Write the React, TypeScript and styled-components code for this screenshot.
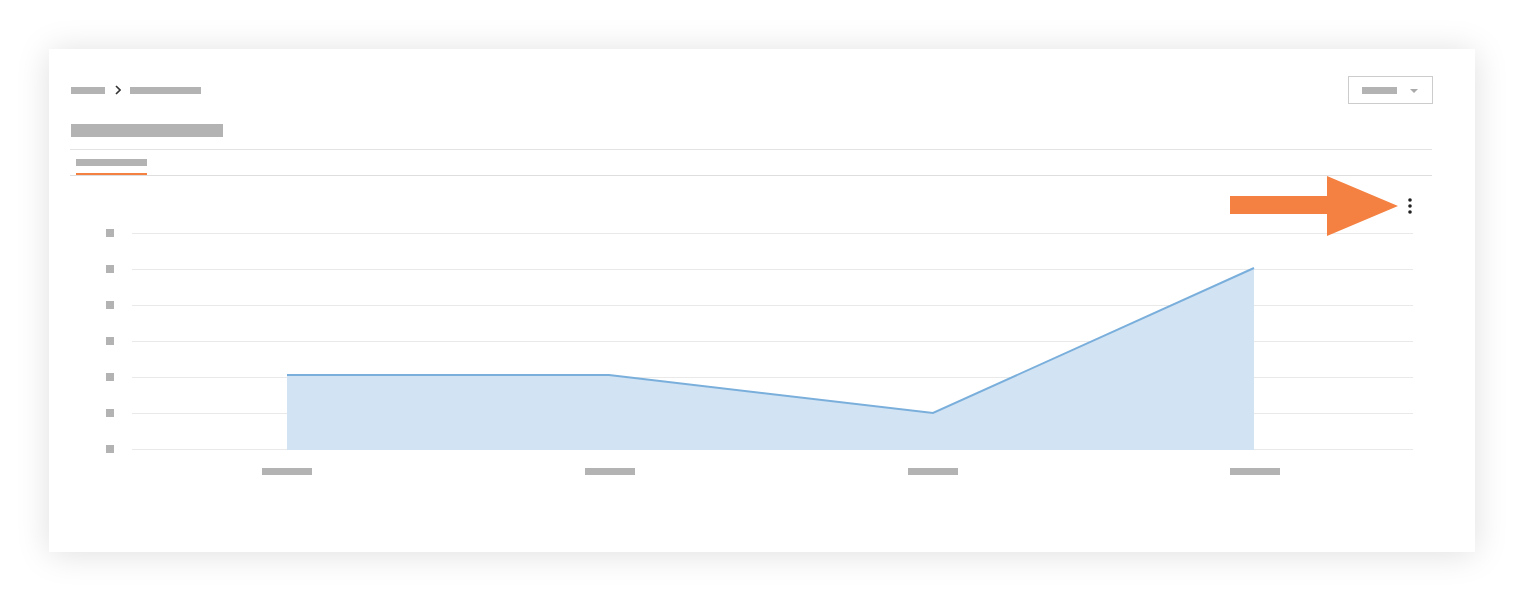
import React from "react";
import styled, { createGlobalStyle } from "styled-components";

const Global = createGlobalStyle`
  html, body { margin: 0; padding: 0; background: #ffffff; }
  body { font-family: "Liberation Sans", Arial, sans-serif; }
  * { box-sizing: border-box; }
`;

const Page = styled.div`
  padding: 49px;
  width: 1524px;
  height: 601px;
`;

const Card = styled.div`
  position: relative;
  width: 1426px;
  height: 503px;
  background: #fff;
  box-shadow: 0 2px 32px rgba(0, 0, 0, 0.13);
  padding: 27px 43px 0 22px;
  display: flex;
  flex-direction: column;
`;

const Header = styled.div`
  display: flex;
  align-items: center;
  justify-content: space-between;
  height: 28px;
`;

const Breadcrumb = styled.div`
  display: flex;
  align-items: center;
  gap: 10px;
`;

const Bar = styled.div<{ $w: number; $h?: number }>`
  width: ${(p) => p.$w}px;
  height: ${(p) => p.$h ?? 7}px;
  background: #b3b3b3;
`;

const Chevron = styled.svg`
  width: 6px;
  height: 10px;
  margin-right: -1px;
`;

const Select = styled.div`
  width: 85px;
  height: 28px;
  margin-right: -1px;
  border: 1px solid #cccccc;
  display: flex;
  align-items: center;
  padding-left: 13px;
  gap: 13px;
`;

const Caret = styled.div`
  width: 0;
  height: 0;
  border-left: 4px solid transparent;
  border-right: 4px solid transparent;
  border-top: 4px solid #aaaaaa;
  margin-top: 1px;
`;

const Title = styled.div`
  margin-top: 20px;
  width: 152px;
  height: 13px;
  background: #b3b3b3;
`;

const Divider = styled.div`
  margin-top: 12px;
  height: 1px;
  background: #e3e3e3;
  margin-left: -1px;
`;

const Tabs = styled.div`
  display: flex;
  border-bottom: 1px solid #dedede;
  margin-left: -1px;
  padding-left: 6px;
`;

const Tab = styled.div<{ $active?: boolean }>`
  padding-top: 9px;
  width: 71px;
  border-bottom: 2px solid ${(p) => (p.$active ? "#f48041" : "transparent")};
  padding-bottom: 7px;
`;

const ChartSection = styled.div`
  display: flex;
  flex-direction: column;
`;

const Toolbar = styled.div`
  display: flex;
  justify-content: flex-end;
  padding-top: 22px;
  padding-right: 14px;
`;

const Kebab = styled.button`
  width: 16px;
  height: 16px;
  border: none;
  background: transparent;
  padding: 0;
  display: flex;
  align-items: center;
  justify-content: center;
  cursor: pointer;
`;

const ChartSvg = styled.svg`
  display: block;
  width: 1361px;
  height: 276px;
`;

const Annotation = styled.svg`
  position: absolute;
  left: 1181px;
  top: 127px;
  width: 168px;
  height: 60px;
`;

const gridYs = [19, 55, 91, 127, 163, 199, 235];
const points: [number, number][] = [
  [216, 161],
  [538, 161],
  [862, 199],
  [1183, 54],
];
const xLabels = [216, 539, 862, 1184];

export default function App() {
  const line = points.map((p) => p.join(",")).join(" ");
  const area = `${points[0][0]},236 ${line} ${points[points.length - 1][0]},236`;
  return (
    <>
      <Global />
      <Page>
        <Card>
          <Header>
            <Breadcrumb>
              <Bar $w={34} />
              <Chevron viewBox="0 0 6 10">
                <path d="M1 1 L5 5 L1 9" fill="none" stroke="#333" strokeWidth="1.6" />
              </Chevron>
              <Bar $w={71} />
            </Breadcrumb>
            <Select>
              <Bar $w={35} />
              <Caret />
            </Select>
          </Header>
          <Title />
          <Divider />
          <Tabs>
            <Tab $active>
              <Bar $w={71} />
            </Tab>
          </Tabs>
          <ChartSection>
            <Toolbar>
              <Kebab aria-label="More">
                <svg width="4" height="16" viewBox="0 0 4 16">
                  <circle cx="2" cy="2" r="1.8" fill="#222" />
                  <circle cx="2" cy="8" r="1.8" fill="#222" />
                  <circle cx="2" cy="14" r="1.8" fill="#222" />
                </svg>
              </Kebab>
            </Toolbar>
            <ChartSvg viewBox="0 0 1361 276">
              {gridYs.map((y) => (
                <g key={y}>
                  <line x1={61} x2={1342} y1={y + 0.5} y2={y + 0.5} stroke="#e9e9e9" strokeWidth="1" />
                  <rect x={35} y={y - 4} width={8} height={8} fill="#b3b3b3" />
                </g>
              ))}
              <polygon points={area} fill="#d2e3f3" />
              <polyline points={line} fill="none" stroke="#7aafdc" strokeWidth="2" />
              {xLabels.map((x) => (
                <rect key={x} x={x - 25} y={254} width={50} height={7} fill="#b3b3b3" />
              ))}
            </ChartSvg>
          </ChartSection>
          <Annotation viewBox="0 0 168 60">
            <polygon points="0,20 97,20 97,0 168,30 97,60 97,38 0,38" fill="#f48041" />
          </Annotation>
        </Card>
      </Page>
    </>
  );
}
